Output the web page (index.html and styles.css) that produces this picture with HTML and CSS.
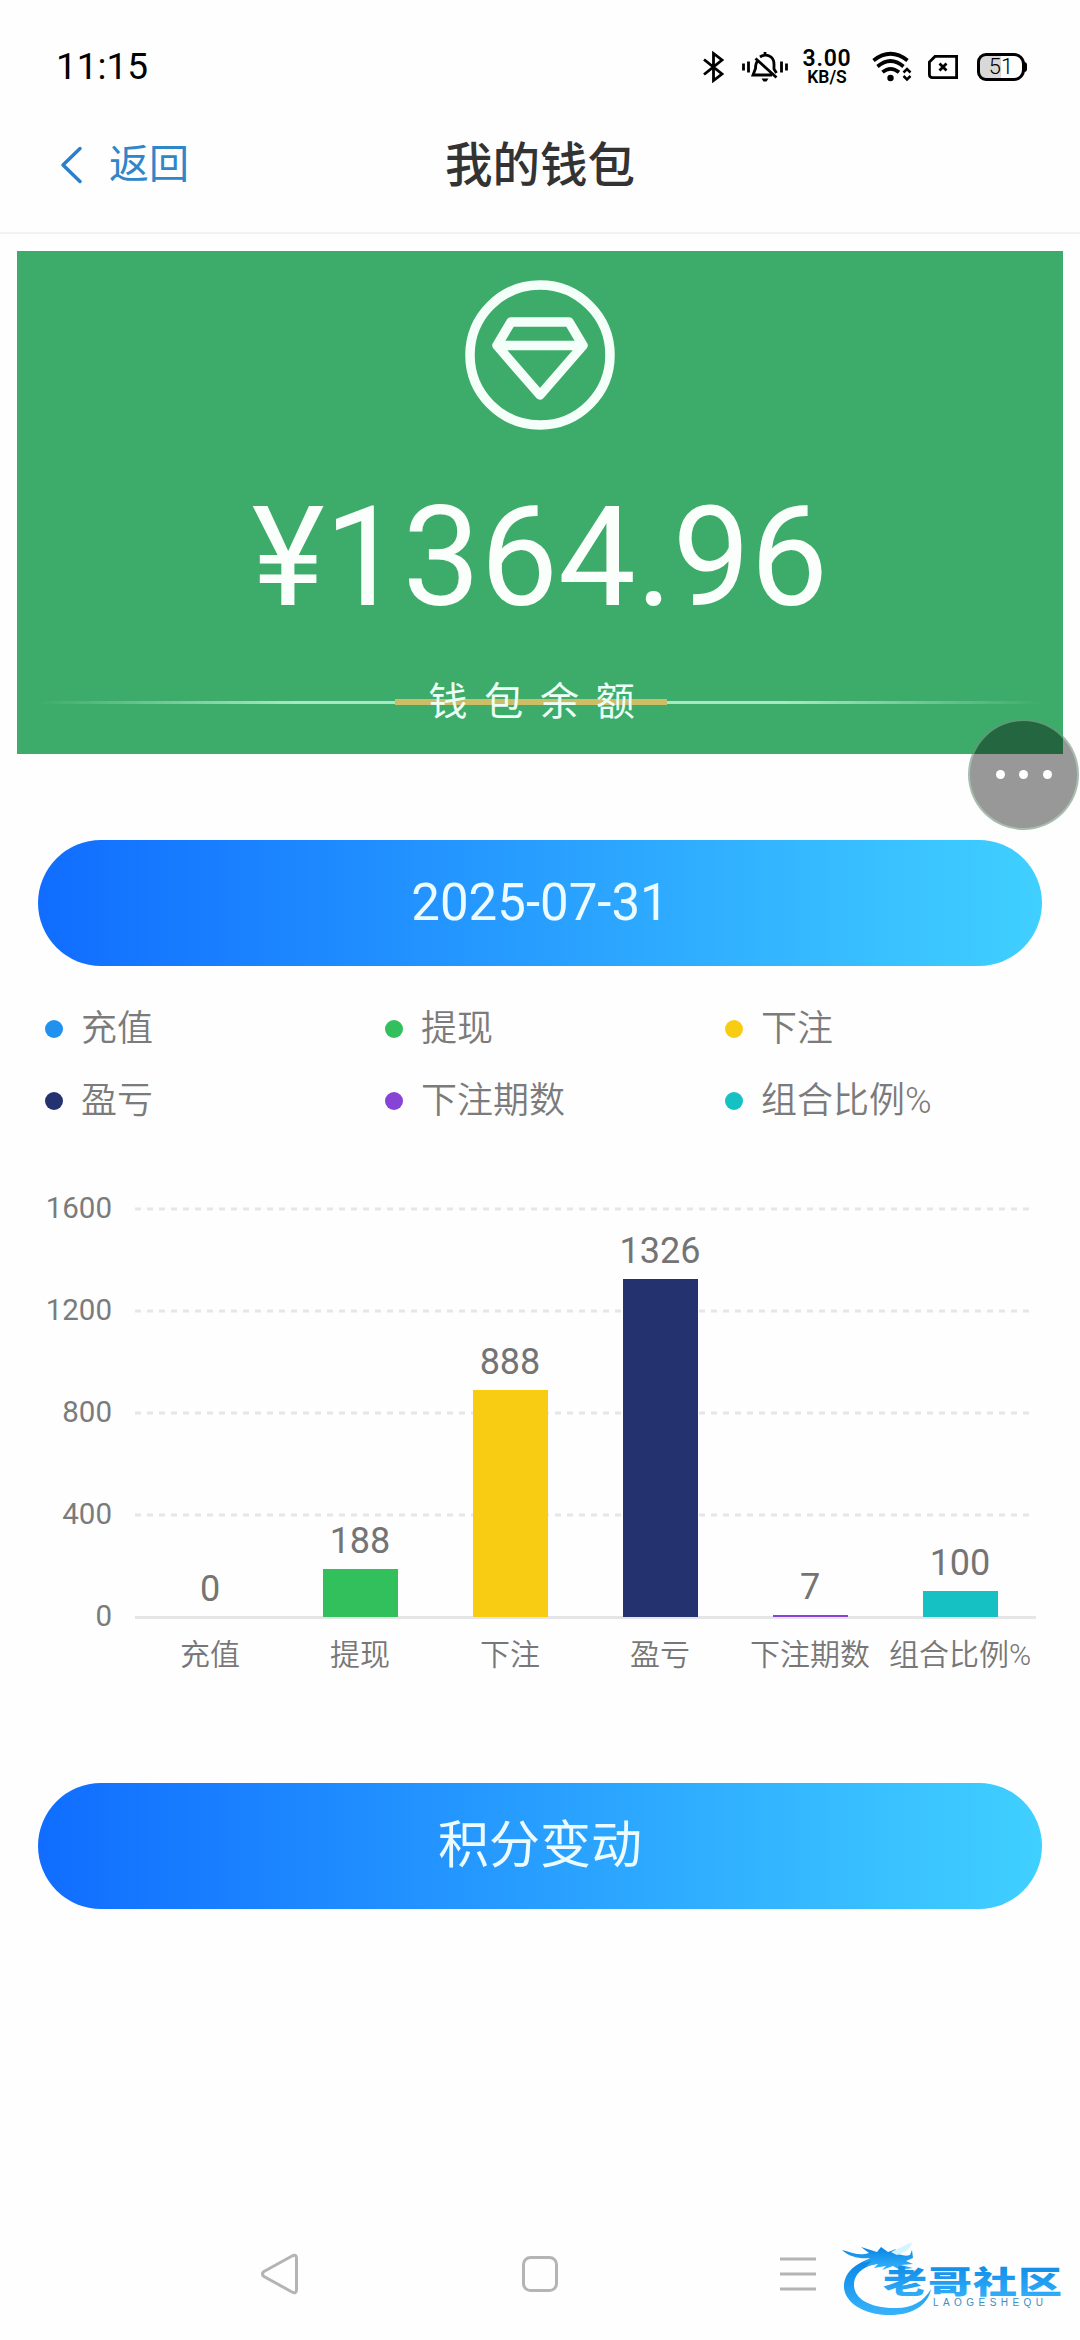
FILE: index.html
```html
<!DOCTYPE html>
<html lang="zh-CN">
<head>
<meta charset="utf-8">
<title>我的钱包</title>
<link rel="stylesheet" href="styles.css">
</head>
<body>
<div class="screen">
  <header class="status">
    <span class="clock">11:15</span>
    <div class="status-icons">
      <svg class="ic-bt" width="24" height="32" viewBox="0 0 24 32"><path d="M2 8.500L20 23L11.500 29.500V2.500L20 9L2 23.500" fill="none" stroke="#000" stroke-width="2.800"/></svg>
      <svg class="ic-bell" width="46" height="32" viewBox="0 0 46 32"><g fill="none" stroke="#000" stroke-width="2.800"><path d="M1.500 12.500v7M6.500 10.500v11M39.500 10.500v11M44.500 12.500v7"/><path d="M16 9.500c-2 2-2.500 4-2.500 8l-2.500 6.500h19M18 6c6-4 14-1 14 7v5l2.500 4M13.500 7.500l21 19M23 1v4"/></g><path d="M19.500 27.500h7l-2 3h-3z"/></svg>
      <div class="speed"><b>3.00</b><span>KB/S</span></div>
      <svg class="ic-wifi" width="40" height="32" viewBox="0 0 40 32"><g fill="none" stroke="#000" stroke-width="3.700"><path d="M1.500 9.500Q18.500-4 35.500 9.500"/><path d="M5.500 15.500Q18.500 4.500 31.500 15.500"/><path d="M10.500 21.200Q18.500 14.500 27 21.200"/><path d="M31.500 21.500l3.500-3.500 3.500 3.500M31.500 25l3.500 3.500 3.500-3.500" stroke-width="2.500"/></g><circle cx="18.500" cy="27" r="3.200"/></svg>
      <svg class="ic-sim" width="30" height="24" viewBox="0 0 30 24"><path d="M7 1.400h21.600v21.200H4.500Q1.400 22.600 1.400 19.500V7z" fill="none" stroke="#000" stroke-width="2.800"/><path d="M11.500 8.500l7 7m0-7l-7 7" stroke="#000" stroke-width="2.800"/></svg>
      <div class="battery"><span>51</span></div>
    </div>
  </header>

  <nav class="navbar">
    <a class="back"><svg width="24" height="38" viewBox="0 0 24 38"><path d="M20 2.500L3 19l17 16.500" fill="none" stroke="#2b7fc9" stroke-width="3.500" stroke-linecap="round" stroke-linejoin="round"/></svg><span>返回</span></a>
    <h1>我的钱包</h1>
  </nav>

  <main>
    <section class="wallet">
      <svg class="gem" width="150" height="150" viewBox="0 0 150 150"><g fill="none" stroke="#f5fff9" stroke-width="9.500" stroke-linejoin="round"><circle cx="75" cy="75" r="70"/><path d="M46 42h58l14 23.500L75 115 32 65.500zM32 65.500h86"/></g></svg>
      <div class="amount">¥1364.96</div>
      <div class="caption"><span>钱包余额</span></div>
    </section>

    <button class="pill date">2025-07-31</button>

    <ul class="legend">
      <li><i class="blue"></i>充值</li>
      <li><i class="green"></i>提现</li>
      <li><i class="yellow"></i>下注</li>
      <li><i class="navy"></i>盈亏</li>
      <li><i class="purple"></i>下注期数</li>
      <li><i class="teal"></i>组合比例%</li>
    </ul>

    <section class="chart">
      <div class="scale"><span>1600</span><span>1200</span><span>800</span><span>400</span><span>0</span></div>
      <div class="plot">
        <svg class="grid" width="901" height="412" viewBox="0 0 901 412"><path d="M0 2h896M0 104h896M0 206h896M0 308h896" stroke="#e6e6e6" stroke-width="3" stroke-dasharray="6 6"/><path d="M0 410.500h901" stroke="#e5e5e8" stroke-width="3"/></svg>
        <div class="bars">
          <div class="col"><b>0</b><i class="blue" style="height:0px"></i></div>
          <div class="col"><b>188</b><i class="green" style="height:48px"></i></div>
          <div class="col"><b>888</b><i class="yellow" style="height:227px"></i></div>
          <div class="col"><b>1326</b><i class="navy" style="height:338px"></i></div>
          <div class="col"><b>7</b><i class="purple" style="height:2px"></i></div>
          <div class="col"><b>100</b><i class="teal" style="height:26px"></i></div>
        </div>
        <div class="labels"><span>充值</span><span>提现</span><span>下注</span><span>盈亏</span><span>下注期数</span><span>组合比例%</span></div>
      </div>
    </section>

    <button class="pill change">积分变动</button>
  </main>

  <footer class="sysnav">
    <svg width="40" height="44" viewBox="0 0 40 44"><path d="M32 4Q36.500 1.500 36.500 6.500V37.500Q36.500 42.500 32 40L4 24.500Q.8 22 4 19.500z" fill="none" stroke="#b4b4b4" stroke-width="3"/></svg>
    <svg width="36" height="36" viewBox="0 0 36 36"><rect x="1.500" y="1.500" width="33" height="33" rx="7" fill="none" stroke="#b4b4b4" stroke-width="3"/></svg>
    <svg width="36" height="36" viewBox="0 0 36 36"><path d="M0 3h36M0 18h36M0 33h36" stroke="#b4b4b4" stroke-width="3"/></svg>
  </footer>

  <div class="fab"><i></i><i></i><i></i></div>

  <svg class="watermark" width="226" height="76" viewBox="0 0 226 76">
    <defs><linearGradient id="sea" x1="0" y1="0" x2="0" y2="1"><stop offset="0" stop-color="#0784e4"/><stop offset="1" stop-color="#37b3fb"/></linearGradient></defs>
    <path d="M37 16C18 20 5 30 4 44C3 60 22 74 50 74C73 74 88 64 91 48C84 61 70 68 54 67C29 67 14 57 14 44C14 33 23 24 42 22z" fill="url(#sea)"/>
    <path d="M2 9C13 12 20 15 29 12L21 6L37 11L41 6L48 11L56 8L53 12C60 13 64 16 70 14L72 9L73 17L66 20L73 23L61 24L73 27L60 29L53 25L42 29L46 25L34 27L38 23L26 25L32 20L23 22L30 17C20 18 9 16 2 9z" fill="url(#sea)"/>
    <path d="M51 11L72 1C71 8 64 12 57 14" fill="#d5f4ff"/>
    <text class="brand" transform="translate(43 52) scale(1.42 1)" textLength="126" fill="url(#sea)">老哥社区</text>
    <text class="brand-sub" x="93" y="65" textLength="110">LAOGESHEQU</text>
  </svg>
</div>
</body>
</html>
```
FILE: styles.css
```css
* { box-sizing: border-box; margin: 0; padding: 0; }
body { background: #fefefe; font-family: Roboto, "Noto Sans CJK SC", sans-serif; }
.screen { position: relative; width: 1080px; height: 2340px; overflow: hidden; display: flex; flex-direction: column; }
svg { display: block; flex: none; }

.status { height: 132px; padding: 1px 53px 0 56px; display: flex; align-items: center; justify-content: space-between; }
.clock { font-size: 37px; line-height: 44px; color: #000; }
.status-icons { display: flex; align-items: center; }
.ic-bell { margin-left: 16px; }
.speed { width: 50px; margin-left: 14px; display: flex; flex-direction: column; align-items: center; color: #000; }
.speed b { font-size: 23px; line-height: 20px; font-weight: 600; letter-spacing: .7px; }
.speed span { font-size: 17.500px; line-height: 16px; font-weight: 600; }
.ic-wifi { margin-left: 20px; }
.ic-sim { margin-left: 16px; }
.battery { position: relative; width: 48px; height: 28px; margin-left: 19px; margin-right: 2px; border: 3px solid #000; border-radius: 9px 11px 11px 9px; background: linear-gradient(90deg, #d8d8d8 51%, #fff 51%); display: flex; align-items: center; justify-content: center; }
.battery::after { content: ""; position: absolute; right: -5px; top: 6px; width: 3px; height: 10px; background: #000; border-radius: 0 3px 3px 0; }
.battery span { font-size: 22px; line-height: 22px; font-weight: 300; color: #000; }

.navbar { height: 102px; padding: 1px 60px 0; display: grid; grid-template-columns: 1fr auto 1fr; border-bottom: 2px solid #f2f2f2; }
.back { display: flex; align-items: center; gap: 25px; height: 64px; color: #2f86c9; font-size: 40px; line-height: 60px; }
.navbar h1 { padding-top: 2px; font-size: 47.500px; line-height: 62px; height: 64px; font-weight: 500; color: #333; }

.wallet { margin: 17px 17px 0; height: 503px; padding-top: 29px; background: #3dab6a; display: flex; flex-direction: column; align-items: center; color: #fff; }
.amount { margin-top: 46px; font-size: 138.500px; line-height: 164px; color: #fbfffc; }
.caption { width: 1010px; margin-top: 32px; height: 60px; display: flex; justify-content: center; align-items: center; background: linear-gradient(90deg, #cdbd66, #cdbd66) 360px center / 272px 6px no-repeat, linear-gradient(90deg, rgba(190,245,215,0), #a9e8c4 26%, #a9e8c4 74%, rgba(190,245,215,0)) center / 100% 3px no-repeat; }
.caption span { font-size: 39px; line-height: 58px; letter-spacing: 16.700px; color: #ecfff4; }

.pill { display: block; width: 1004px; height: 126px; margin: 86px auto 0; border: 0; border-radius: 63px; background: linear-gradient(90deg, #106dff, #40d0ff); color: #ecfbff; font: 400 51px/126px Roboto, "Noto Sans CJK SC", sans-serif; text-align: center; }

.legend { list-style: none; margin: 27px 0 0 45px; display: grid; grid-template-columns: repeat(3, 340px); grid-auto-rows: 72px; }
.legend li { display: flex; align-items: center; gap: 18px; font-size: 36px; line-height: 50px; font-weight: 350; color: #7b7b7b; white-space: nowrap; }
.legend i { width: 18px; height: 18px; border-radius: 50%; }
.blue { background: #2191ef; }
.green { background: #31c05b; }
.yellow { background: #f9cc14; }
.navy { background: #24326f; }
.purple { background: #8643d6; }
.teal { background: #16c1c4; }

.chart { margin-top: 70px; display: flex; color: #7b7b7b; }
.scale { width: 112px; height: 444px; margin-top: -17px; display: flex; flex-direction: column; justify-content: space-between; text-align: right; font-size: 29.500px; line-height: 36px; }
.plot { position: relative; width: 900px; margin-left: 23px; }
.grid { position: absolute; left: 0; top: 0; }
.bars { position: relative; height: 410px; display: grid; grid-template-columns: repeat(6, 150px); }
.col { display: flex; flex-direction: column; align-items: center; justify-content: flex-end; }
.col b { font-size: 36px; line-height: 42px; margin-bottom: 7px; font-weight: 400; color: #747474; }
.col i { width: 75px; }
.labels { margin-top: 16px; display: grid; grid-template-columns: repeat(6, 150px); justify-items: center; font-size: 30px; line-height: 44px; font-weight: 350; white-space: nowrap; color: #777; }
.change { margin-top: 106px; }

.sysnav { position: absolute; left: 0; right: 0; bottom: 44px; height: 44px; padding: 0 264px 0 260px; display: flex; align-items: center; justify-content: space-between; }

.fab { position: absolute; left: 968px; top: 719px; width: 111px; height: 111px; border-radius: 50%; background: rgba(0,0,0,.4); border: 2px solid rgba(190,255,215,.35); display: flex; align-items: center; justify-content: center; gap: 14.500px; }
.fab i { width: 9px; height: 9px; border-radius: 50%; background: #fff; }
.watermark { position: absolute; left: 840px; top: 2241px; }
.brand { font: 900 31px "Noto Sans CJK SC", sans-serif; }
.brand-sub { font: 400 10px "Liberation Sans", sans-serif; fill: #3a8fc4; }
```
